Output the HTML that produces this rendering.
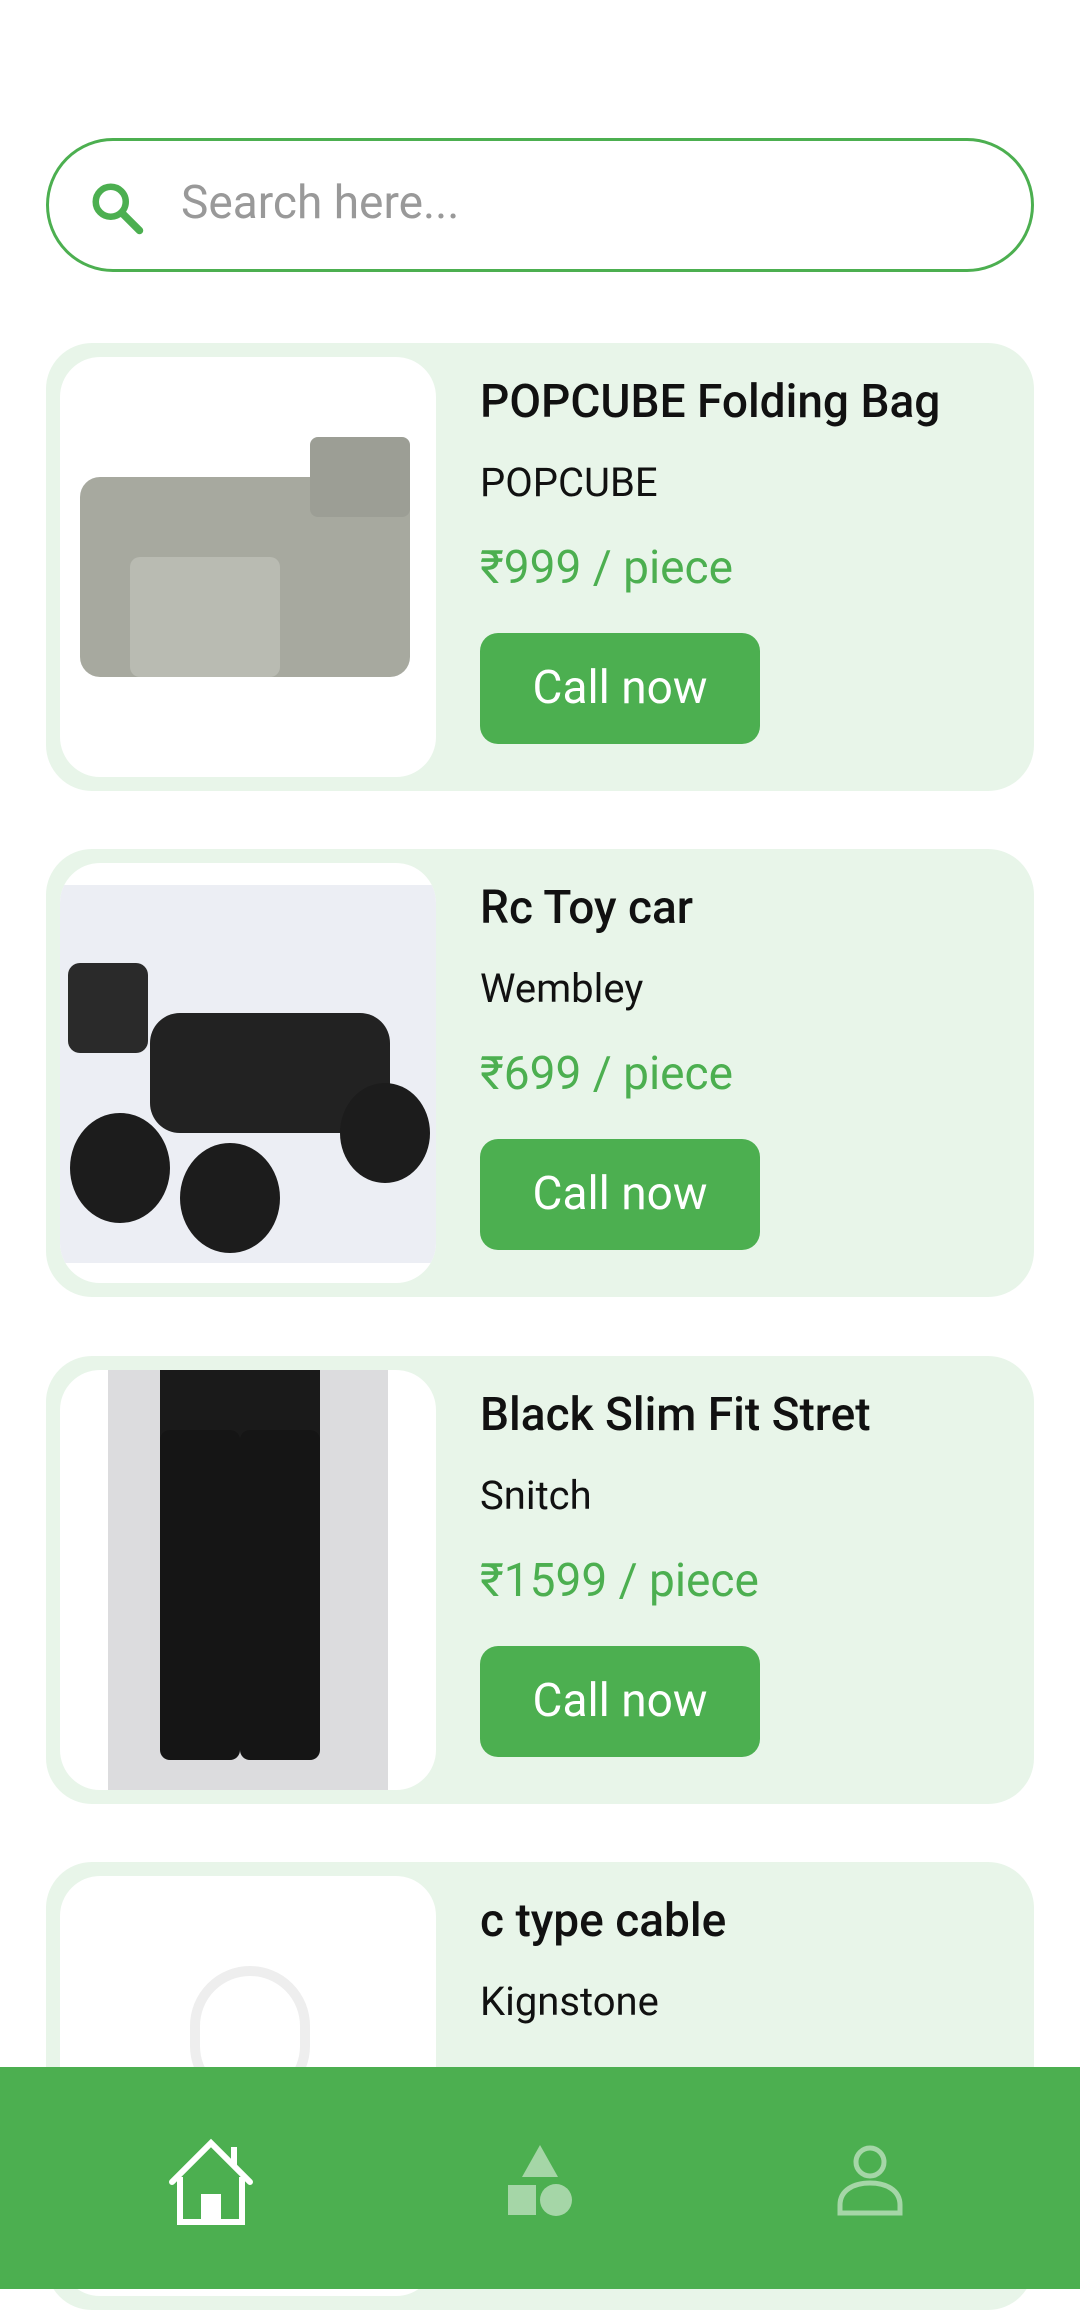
<!DOCTYPE html>
<html><head><meta charset="utf-8"><style>
*{margin:0;padding:0;box-sizing:border-box}
body{width:1080px;height:2289px;background:#fff;font-family:"Roboto","Liberation Sans",sans-serif;position:relative;overflow:hidden}
.search{position:absolute;left:46px;top:138px;width:988px;height:134px;border:3px solid #4CAF50;border-radius:67px}
.search span{position:absolute;left:132px;top:35px;font-size:46px;color:#999}
.search svg{position:absolute;left:38px;top:37px}
.card{position:absolute;left:46px;width:988px;height:448px;background:#E8F5E9;border-radius:46px}
.img{position:absolute;left:14px;top:14px;width:376px;height:420px;background:#fff;border-radius:40px;overflow:hidden}
.t{position:absolute;left:434px;top:32px;font-size:46px;font-weight:500;color:#111}
.b{position:absolute;left:434px;top:116px;font-size:40px;color:#111}
.p{position:absolute;left:434px;top:198px;font-size:46px;color:#4CAF50}
.btn{position:absolute;left:434px;top:290px;width:280px;height:111px;background:#4CAF50;border-radius:18px;color:#fff;font-size:46px;text-align:center;line-height:111px}
.nav{position:absolute;left:0;top:2067px;width:1080px;height:222px;background:#4CAF50}
</style></head><body>
<div class="search"><svg width="60" height="60" viewBox="0 0 24 24"><circle cx="9.5" cy="9.5" r="6" fill="none" stroke="#4CAF50" stroke-width="2.6"/><path d="M14 14l7 7" stroke="#4CAF50" stroke-width="3" stroke-linecap="round"/></svg><span>Search here...</span></div>

<div class="card" style="top:343px"><div class="img">
<div style="position:absolute;left:20px;top:120px;width:330px;height:200px;background:#a7a99f;border-radius:20px"></div>
<div style="position:absolute;left:250px;top:80px;width:100px;height:80px;background:#9c9e95;border-radius:8px"></div>
<div style="position:absolute;left:70px;top:200px;width:150px;height:120px;background:#b9bbb2;border-radius:10px"></div>
</div>
<div class="t">POPCUBE Folding Bag</div><div class="b">POPCUBE</div><div class="p">₹999 / piece</div><div class="btn">Call now</div></div>

<div class="card" style="top:849px"><div class="img"><div style="position:absolute;left:0;top:22px;width:376px;height:378px;background:#eceef4"></div>
<div style="position:absolute;left:90px;top:150px;width:240px;height:120px;background:#222;border-radius:30px"></div>
<div style="position:absolute;left:10px;top:250px;width:100px;height:110px;background:#1c1c1c;border-radius:50%"></div>
<div style="position:absolute;left:120px;top:280px;width:100px;height:110px;background:#1c1c1c;border-radius:50%"></div>
<div style="position:absolute;left:280px;top:220px;width:90px;height:100px;background:#1c1c1c;border-radius:50%"></div>
<div style="position:absolute;left:8px;top:100px;width:80px;height:90px;background:#2a2a2a;border-radius:12px"></div>
</div>
<div class="t">Rc Toy car</div><div class="b">Wembley</div><div class="p">₹699 / piece</div><div class="btn">Call now</div></div>

<div class="card" style="top:1356px"><div class="img"><div style="position:absolute;left:48px;top:0;width:280px;height:420px;background:#dcdcde"></div>
<div style="position:absolute;left:100px;top:0;width:160px;height:70px;background:#1a1a1a"></div>
<div style="position:absolute;left:100px;top:60px;width:80px;height:330px;background:#151515;border-radius:10px"></div>
<div style="position:absolute;left:180px;top:60px;width:80px;height:330px;background:#151515;border-radius:10px"></div>
</div>
<div class="t">Black Slim Fit Stret</div><div class="b">Snitch</div><div class="p">₹1599 / piece</div><div class="btn">Call now</div></div>

<div class="card" style="top:1862px"><div class="img"><div style="position:absolute;left:130px;top:90px;width:120px;height:140px;border:10px solid #eee;border-radius:60px"></div></div>
<div class="t">c type cable</div><div class="b">Kignstone</div><div class="p">₹199 / piece</div><div class="btn">Call now</div></div>

<div class="nav">
<svg style="position:absolute;left:166px;top:70px" width="90" height="90" viewBox="0 0 90 90"><path d="M6 45L45 6L84 45" fill="none" stroke="#fff" stroke-width="6" stroke-linecap="round"/><path d="M68 10v18" stroke="#fff" stroke-width="6"/><path d="M14 40v45h62V40" fill="none" stroke="#fff" stroke-width="6"/><rect x="35" y="57" width="20" height="28" fill="#fff"/></svg>
<svg style="position:absolute;left:505px;top:78px" width="70" height="72" viewBox="0 0 70 72"><polygon points="35,0 53,32 17,32" fill="#A5D6A7"/><rect x="3" y="40" width="28" height="30" fill="#A5D6A7"/><ellipse cx="51" cy="55" rx="16" ry="16" fill="#A5D6A7"/></svg>
<svg style="position:absolute;left:836px;top:78px" width="68" height="72" viewBox="0 0 68 72"><circle cx="34" cy="17" r="14" fill="none" stroke="#A5D6A7" stroke-width="5"/><path d="M4 68V60C4 45 18 38 34 38S64 45 64 60v8Z" fill="none" stroke="#A5D6A7" stroke-width="5"/></svg>
</div>
</body></html>
